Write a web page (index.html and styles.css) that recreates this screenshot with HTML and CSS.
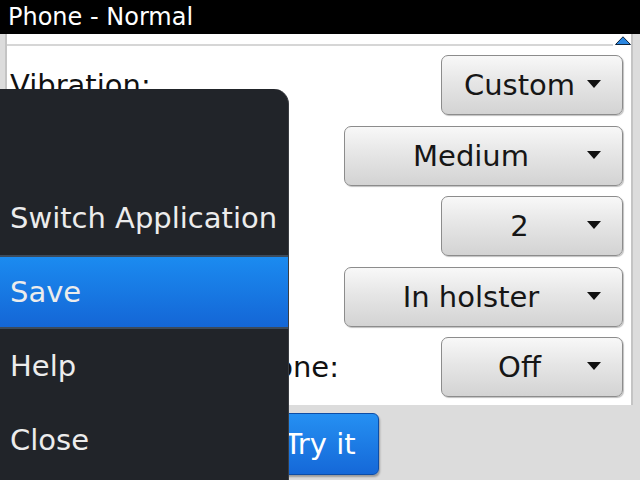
FILE: index.html
```html
<!DOCTYPE HTML>
<html>
<head>
	<meta http-equiv="Content-Type" content="text/html; charset=utf-8">
	<title>Phone - Normal</title>
	<link rel="stylesheet" href="styles.css">
</head>
<body>
<div id="title">Phone - Normal</div>

<div class="screen">
	<div class="panel">
		<div class="top">
			<div class="rule"></div>
			<svg class="up" width="16" height="9" viewBox="0 0 16 9"><path d="M0.5 8.5 L8 0.8 L15.5 8.5 Z" fill="#2b86e0" stroke="#10243a" stroke-width="1"/></svg>
		</div>

		<!-- labels under the menu are not visible, left empty -->
		<div class="rows">
			<div class="row"><span class="lbl">Vibration:</span><div class="drop narrow"><span>Custom</span><i></i></div></div>
			<div class="row"><span class="lbl"></span><div class="drop wide"><span>Medium</span><i></i></div></div>
			<div class="row"><span class="lbl"></span><div class="drop narrow"><span>2</span><i></i></div></div>
			<div class="row"><span class="lbl"></span><div class="drop wide"><span>In holster</span><i></i></div></div>
			<div class="row"><span class="lbl">Vibrate With Ringtone:</span><div class="drop narrow"><span>Off</span><i></i></div></div>
		</div>
	</div>

	<div class="actions">
		<div class="btn">Try it</div>
	</div>
</div>

<!-- popup menu over the screen -->
<div class="menu">
	<div class="item">Switch Application</div>
	<div class="item sel">Save</div>
	<div class="item">Help</div>
	<div class="item">Close</div>
</div>
</body>
</html>
```

FILE: styles.css
```css
body {
	margin:0;
	width:640px;
	height:480px;
	overflow:hidden;
	background:#dcdcdc;
	font-family:"DejaVu Sans", sans-serif;
	position:relative;
	}
#title {
	height:34px;
	line-height:34px;
	background:#000;
	color:#fff;
	font-size:24px;
	padding-left:8px;
	}
.panel {
	height:371px;
	margin:0 7px 0 5px;
	background:#fff;
	border-left:2px solid #c4c4c4;
	border-right:2px solid #c4c4c4;
	box-sizing:border-box;
	}
.top {
	height:12px;
	display:flex;
	align-items:flex-end;
	}
.rule {
	flex:1;
	height:2px;
	background:#d6d6d6;
	}
.up {
	display:block;
	margin:0 0 1px 2px;
	}
.rows {
	display:flex;
	flex-direction:column;
	gap:10.5px;
	padding:9px 8px 0 3px;
	}
.row {
	display:flex;
	justify-content:space-between;
	align-items:center;
	}
.lbl {
	font-size:29px;
	color:#111;
	white-space:nowrap;
	}
.drop {
	height:60px;
	box-sizing:border-box;
	border:1px solid #8c8c8c;
	border-radius:7px;
	background:linear-gradient(#f8f8f8, #e6e6e6 45%, #d3d3d3);
	box-shadow:1px 1px 1px rgba(0,0,0,0.25);
	display:flex;
	align-items:center;
	font-size:29px;
	color:#161616;
	}
.narrow { width:182px; }
.wide { width:279px; }
.drop span {
	flex:1;
	text-align:center;
	padding-left:10px;
	}
.drop i {
	width:0;
	height:0;
	border-left:7.5px solid transparent;
	border-right:7.5px solid transparent;
	border-top:8px solid #111;
	margin:0 21px 2px 0;
	}
.actions {
	display:flex;
	justify-content:center;
	padding-top:8px;
	}
.btn {
	height:62px;
	line-height:60px;
	box-sizing:border-box;
	padding:0 22px;
	border:1px solid #0d4da6;
	border-radius:6px;
	background:linear-gradient(#2590f2, #1568d8);
	box-shadow:1px 2px 2px rgba(0,0,0,0.3);
	color:#fff;
	font-size:29px;
	}
.menu {
	position:absolute;
	left:0;
	top:89px;
	width:289px;
	bottom:0;
	background:#212429;
	border-top-right-radius:15px;
	padding-top:92px;
	box-sizing:border-box;
	border-right:1px solid #3a3d42;
	}
.item {
	height:74px;
	line-height:74px;
	padding-left:10px;
	color:#ececec;
	font-size:29px;
	box-sizing:border-box;
	}
.sel {
	background:linear-gradient(#1b8bf0, #1466d6);
	border-top:2px solid #3c4a5a;
	border-bottom:2px solid #3c4a5a;
	line-height:70px;
	}
```
